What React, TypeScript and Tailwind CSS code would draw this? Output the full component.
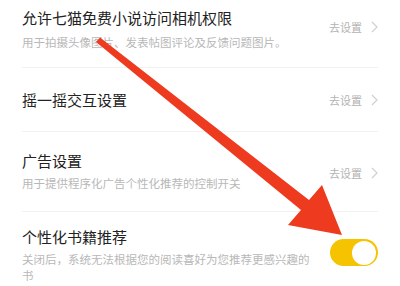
import React from "react";

const font = { fontFamily: '"Noto Sans CJK SC", "Noto Sans", sans-serif' };

const GoSet = () => (
  <div className="flex shrink-0 items-center gap-[9px]">
    <span className="text-[11px] leading-[16px] text-[#b3b3b3]">去设置</span>
    <svg width="7" height="12" viewBox="0 0 7 12" fill="none">
      <path d="M1 1l5 5-5 5" stroke="#d0d0d0" strokeWidth="1.2" />
    </svg>
  </div>
);

const Divider = () => <div className="mx-[22px] h-px bg-[#f2f2f2]" />;

const Toggle = () => (
  <div className="flex h-[27px] w-[48px] shrink-0 items-center justify-end rounded-full bg-[#f6c300] pr-[2px]">
    <div className="h-[24px] w-[24px] rounded-full bg-white" />
  </div>
);

const Arrow = () => (
  <svg
    className="pointer-events-none absolute left-0 top-0"
    width="400"
    height="286"
    viewBox="0 0 400 286"
  >
    <polygon
      points="96,42 100,37.5 309,200 322,185 342,235 288,225 301,210"
      fill="#ee3a1e"
    />
  </svg>
);

export default function App() {
  return (
    <div
      className="relative h-[286px] w-[400px] overflow-hidden bg-white"
      style={font}
    >
      {/* camera permission */}
      <div className="flex h-[67px] items-start justify-between px-[22px] pt-[7px]">
        <div className="flex flex-col">
          <p className="text-[15px] leading-[22px] text-[#222]">
            允许七猫免费小说访问相机权限
          </p>
          <p className="mt-[4px] text-[11.5px] leading-[18px] text-[#b8b8b8]">
            用于拍摄头像图片、发表帖图评论及反馈问题图片。
          </p>
        </div>
        <div className="mt-[12px]">
          <GoSet />
        </div>
      </div>
      <Divider />

      {/* shake */}
      <div className="flex h-[63px] items-center justify-between px-[22px]">
        <p className="text-[15px] leading-[22px] text-[#222]">摇一摇交互设置</p>
        <GoSet />
      </div>
      <Divider />

      {/* ads */}
      <div className="flex h-[79px] items-center justify-between px-[22px] pb-[2px]">
        <div className="flex flex-col">
          <p className="text-[15px] leading-[22px] text-[#222]">广告设置</p>
          <p className="mt-[2px] text-[11.5px] leading-[18px] text-[#b8b8b8]">
            用于提供程序化广告个性化推荐的控制开关
          </p>
        </div>
        <div className="mt-[4px]">
          <GoSet />
        </div>
      </div>
      <Divider />

      {/* personalised books */}
      <div className="flex items-start justify-between px-[22px] pt-[14px]">
        <div className="flex w-[292px] flex-col">
          <p className="text-[15px] leading-[22px] text-[#222]">个性化书籍推荐</p>
          <p className="mt-[3px] text-[11.5px] leading-[16px] text-[#b8b8b8]">
            关闭后，系统无法根据您的阅读喜好为您推荐更感兴趣的书
          </p>
        </div>
        <div className="mt-[13px]">
          <Toggle />
        </div>
      </div>

      <Arrow />
    </div>
  );
}
